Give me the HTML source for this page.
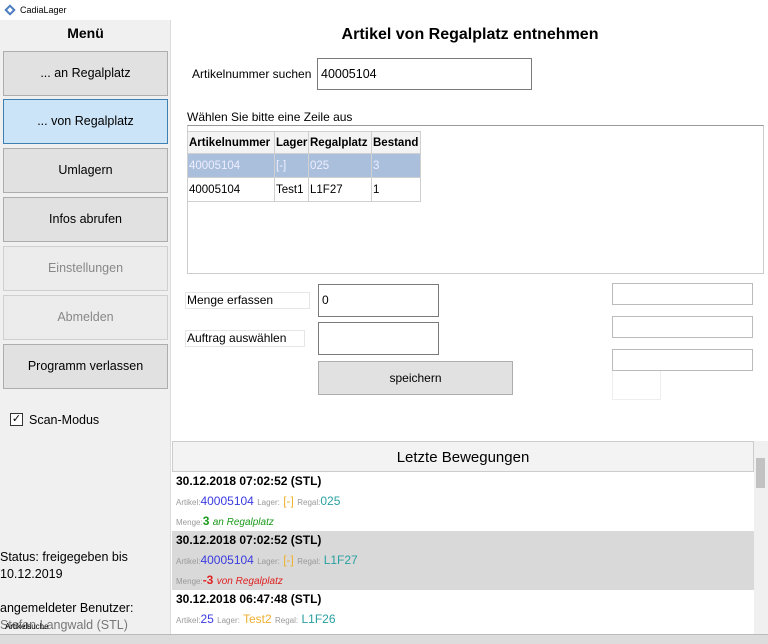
<!DOCTYPE html><html><head><meta charset="utf-8"><style>
*{margin:0;padding:0;box-sizing:border-box}
body{width:768px;height:644px;overflow:hidden;background:#fff;font-family:"Liberation Sans",sans-serif;font-size:12px;color:#000;position:relative}
.a{position:absolute}
.btn{position:absolute;left:3px;width:165px;height:45px;background:#e1e1e1;border:1px solid #adadad;text-align:center;line-height:43px;font-size:12.5px}
.dis{color:#888}
table{table-layout:fixed;width:233px}
td,th{border:1px solid #d0d0d0;padding:0 1px;height:24px;font-size:11.5px;text-align:left;white-space:nowrap;overflow:hidden}
th{background:#f3f3f3;font-weight:bold;height:22px}
.box{position:absolute;border:1px solid #7a7a7a;background:#fff}
.lb{position:absolute;border:1px solid #e6e6e6;font-size:12px;padding-left:1px}
.s{font-size:8px;color:#999}
.e{padding-left:4px}
.e b{font-size:12px;display:block;height:19px;line-height:19px}
.e div{height:20px;line-height:20px}
</style></head><body>
<div class="a" style="left:0;top:0;width:768px;height:20px;background:#fff;font-size:9px;line-height:20px;padding-left:20px">CadiaLager</div>
<div class="a" style="left:6px;top:6px;width:8px;height:8px;border:2px solid #4a7cc0;transform:rotate(45deg)"></div>
<div class="a" style="left:0;top:20px;width:171px;height:624px;background:#f0f0f0;border-right:1px solid #dcdcdc"></div>
<div class="a" style="left:0;top:25px;width:171px;text-align:center;font-weight:bold;font-size:14px">Menü</div>
<div class="btn" style="top:51px">... an Regalplatz</div>
<div class="btn" style="top:99px;background:#cce4f7;border-color:#3c7fb1">... von Regalplatz</div>
<div class="btn" style="top:148px">Umlagern</div>
<div class="btn" style="top:197px">Infos abrufen</div>
<div class="btn dis" style="top:246px;background:#ececec;border-color:#cfcfcf">Einstellungen</div>
<div class="btn dis" style="top:295px;background:#ececec;border-color:#cfcfcf">Abmelden</div>
<div class="btn" style="top:344px">Programm verlassen</div>
<div class="a" style="left:10px;top:413px;width:13px;height:13px;border:1px solid #333;background:#fff;font-size:11px;line-height:11px;text-align:center">✓</div>
<div class="a" style="left:29px;top:413px;font-size:12.5px">Scan-Modus</div>
<div class="a" style="left:0;top:549px;font-size:12.5px;line-height:17px">Status: freigegeben bis<br>10.12.2019</div>
<div class="a" style="left:0;top:600px;font-size:12.5px;line-height:17px">angemeldeter Benutzer:<br><span style="color:#777">Stefan Langwald (STL)</span></div>
<div class="a" style="left:5px;top:622px;font-size:8px">Artikelsuche</div>
<div class="a" style="left:172px;top:20px;width:596px;height:422px;background:#fff;border-bottom:1px solid #ddd"></div>
<div class="a" style="left:172px;top:26px;width:596px;text-align:center;font-weight:bold;font-size:16px">Artikel von Regalplatz entnehmen</div>
<div class="a" style="left:192px;top:67px;font-size:12px">Artikelnummer suchen</div>
<div class="box" style="left:317px;top:58px;width:215px;height:32px;padding:8px 3px;font-size:12.5px">40005104</div>
<div class="a" style="left:187px;top:110px;font-size:12px">Wählen Sie bitte eine Zeile aus</div>
<div class="a" style="left:187px;top:125px;width:577px;height:149px;border:1px solid #ccc;border-top-color:#999"></div>
<table class="a" style="left:187px;top:131px;border-collapse:collapse;background:#fff">
<colgroup><col style="width:87px"><col style="width:34px"><col style="width:63px"><col style="width:49px"></colgroup>
<tr><th>Artikelnummer</th><th>Lager</th><th>Regalplatz</th><th>Bestand</th></tr>
<tr style="background:#a9bfdc;color:#eef"><td>40005104</td><td>[-]</td><td>025</td><td>3</td></tr>
<tr><td>40005104</td><td>Test1</td><td>L1F27</td><td>1</td></tr></table>
<div class="lb" style="left:185px;top:292px;width:125px;height:17px">Menge erfassen</div>
<div class="lb" style="left:185px;top:330px;width:120px;height:17px">Auftrag auswählen</div>
<div class="box" style="left:318px;top:284px;width:121px;height:33px;padding:8px 3px">0</div>
<div class="box" style="left:318px;top:322px;width:121px;height:33px"></div>
<div class="a" style="left:318px;top:361px;width:195px;height:34px;background:#e1e1e1;border:1px solid #adadad;text-align:center;line-height:32px">speichern</div>
<div class="a" style="left:612px;top:283px;width:141px;height:22px;border:1px solid #bbb"></div>
<div class="a" style="left:612px;top:316px;width:141px;height:22px;border:1px solid #bbb"></div>
<div class="a" style="left:612px;top:349px;width:141px;height:22px;border:1px solid #bbb"></div>
<div class="a" style="left:612px;top:371px;width:49px;height:29px;border:1px solid #eee;border-top:0"></div>
<div class="a" style="left:172px;top:441px;width:582px;height:31px;background:#f3f3f3;border:1px solid #ccc;text-align:center;line-height:31px;font-size:15px">Letzte Bewegungen</div>
<div class="a" style="left:754px;top:441px;width:14px;height:193px;background:#f0f0f0"></div>
<div class="a" style="left:756px;top:458px;width:9px;height:30px;background:#c2c2c2"></div>
<div class="a" style="left:172px;top:472px;width:582px;height:162px;overflow:hidden">
<div class="e" style="height:59px"><b>30.12.2018 07:02:52 (STL)</b><div><span class="s">Artikel:</span><span style="color:#3a3ae0">40005104</span> <span class="s">Lager:</span> <span style="color:#f0b030">[-]</span> <span class="s">Regal:</span><span style="color:#2aa0a0">025</span></div><div style="height:18px"><span class="s">Menge:</span><b style="display:inline;color:#1a9a1a">3</b> <i style="color:#1a9a1a;font-size:10px">an Regalplatz</i></div></div>
<div class="e" style="height:59px;background:#d9d9d9"><b>30.12.2018 07:02:52 (STL)</b><div><span class="s">Artikel:</span><span style="color:#3a3ae0">40005104</span> <span class="s">Lager:</span> <span style="color:#f0b030">[-]</span> <span class="s">Regal:</span> <span style="color:#2aa0a0">L1F27</span></div><div style="height:18px"><span class="s">Menge:</span><b style="display:inline;color:#e02020">-3</b> <i style="color:#e02020;font-size:10px">von Regalplatz</i></div></div>
<div class="e"><b>30.12.2018 06:47:48 (STL)</b><div><span class="s">Artikel:</span><span style="color:#3a3ae0">25</span> <span class="s">Lager:</span> <span style="color:#f0b030">Test2</span> <span class="s">Regal:</span> <span style="color:#2aa0a0">L1F26</span></div><div style="color:#bbb">Menge: 2 an Regalplatz</div></div>
</div>
<div class="a" style="left:0;top:634px;width:768px;height:10px;background:#dcdcdc;border-top:1px solid #bbb"></div>
</body></html>
